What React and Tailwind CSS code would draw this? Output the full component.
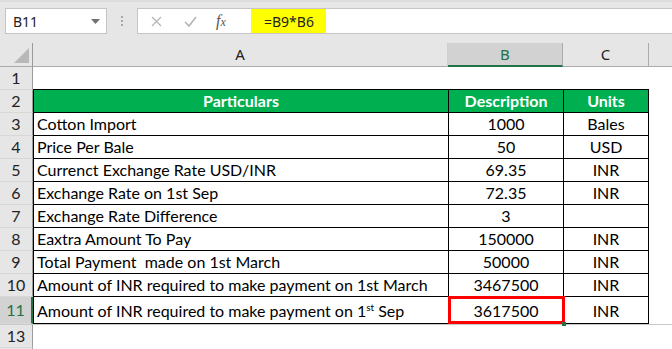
import React from "react";

const F = { fontFamily: "Lato, 'Open Sans', sans-serif" };

const rows = [
  { n: "3", a: "Cotton Import", b: "1000", c: "Bales" },
  { n: "4", a: "Price Per Bale", b: "50", c: "USD" },
  { n: "5", a: "Currenct Exchange Rate USD/INR", b: "69.35", c: "INR" },
  { n: "6", a: "Exchange Rate on 1st Sep", b: "72.35", c: "INR" },
  { n: "7", a: "Exchange Rate Difference", b: "3", c: "" },
  { n: "8", a: "Eaxtra Amount To Pay", b: "150000", c: "INR" },
  { n: "9", a: "Total Payment  made on 1st March", b: "50000", c: "INR" },
  { n: "10", a: "Amount of INR required to make payment on 1st March", b: "3467500", c: "INR" },
];

function RowHead({ children, active, h = "h-[23px]" }) {
  return (
    <div
      className={`${h} w-[33px] shrink-0 flex items-center justify-center border-b border-[#d8d8d8] text-[16px] ${
        active
          ? "bg-[#d2d2d2] text-[#217346] border-r-2 border-r-[#217346]"
          : "bg-[#e6e6e6] text-[#222] border-r border-r-[#9b9b9b]"
      }`}
      style={F}
    >
      {children}
    </div>
  );
}

export default function App() {
  return (
    <div className="w-[672px] h-[349px] overflow-hidden bg-white text-black" style={F}>
      {/* formula bar area */}
      <div className="h-[43px] bg-[#e6e6e6] border-t-2 border-t-[#dcdcdc] flex items-start pt-[6px]">
        <div className="ml-[5px] w-[102px] h-[26px] bg-white border border-[#c6c6c6] flex items-center justify-between pl-[7px] pr-[6px]">
          <span className="text-[14px] text-[#222]" style={{ fontFamily: "'Noto Sans', sans-serif" }}>B11</span>
          <svg width="9" height="5" viewBox="0 0 9 5"><path d="M0 0h9L4.5 5z" fill="#707070" /></svg>
        </div>
        <div className="w-[30px] h-[26px] flex flex-col items-center justify-center gap-[2px]">
          <span className="w-[2px] h-[2px] bg-[#a8a8a8]" />
          <span className="w-[2px] h-[2px] bg-[#a8a8a8]" />
          <span className="w-[2px] h-[2px] bg-[#a8a8a8]" />
        </div>
        <div className="w-[111px] h-[26px] bg-white border border-[#c6c6c6] border-r-0 flex items-center">
          <svg className="ml-[13px]" width="11" height="11" viewBox="0 0 11 11">
            <path d="M1 1L10 10M10 1L1 10" stroke="#b4b4b4" strokeWidth="1.3" />
          </svg>
          <svg className="ml-[22px]" width="13" height="11" viewBox="0 0 13 11">
            <path d="M1 6L5 10L12 1" stroke="#b4b4b4" strokeWidth="1.6" fill="none" />
          </svg>
          <span className="ml-[19px] text-[16px] italic text-[#555] leading-none" style={{ fontFamily: "'Liberation Serif', serif" }}>
            f<span className="text-[12px]">x</span>
          </span>
        </div>
        <div className="w-[3px] h-[26px] bg-white border-y border-[#c6c6c6]" />
        <div className="flex-1 h-[26px] bg-white border border-[#c6c6c6] border-r-0 border-l-0 flex">
          <div className="w-[75px] h-full bg-[#ffff00] flex items-center pl-[13px] text-[14px] text-[#222]" style={{ fontFamily: "'Noto Sans', sans-serif" }}>
            =B9*B6
          </div>
        </div>
      </div>

      {/* column headers */}
      <div className="h-[24px] flex bg-[#e6e6e6] text-[15px] text-[#222]" style={{ fontFamily: "'Noto Sans', sans-serif" }}>
        <div className="w-[33px] h-full border-r border-[#9b9b9b] border-b border-b-[#ababab] relative">
          <svg className="absolute right-[3px] bottom-[3px]" width="15" height="15" viewBox="0 0 15 15">
            <path d="M15 0V15H0z" fill="#b8b8b8" />
          </svg>
        </div>
        <div className="w-[415px] h-full flex items-center justify-center border-r border-[#cfcfcf] border-b border-b-[#ababab]">A</div>
        <div className="w-[115px] h-full flex items-center justify-center bg-[#d2d2d2] text-[#217346] border-r border-[#ababab] border-b-2 border-b-[#217346]">B</div>
        <div className="w-[86px] h-full flex items-center justify-center border-r border-[#ababab] border-b border-b-[#ababab]">C</div>
        <div className="flex-1 h-full border-b border-b-[#ababab]" />
      </div>

      {/* row 1 */}
      <div className="flex">
        <RowHead>1</RowHead>
        <div className="w-[616px] h-[23px] border-b border-black" />
      </div>

      {/* row 2 header */}
      <div className="flex">
        <RowHead>2</RowHead>
        <div className="flex h-[23px] bg-[#00b050] text-white font-bold text-[16px] border-b border-black">
          <div className="w-[415px] border-l border-black flex items-center justify-center">Particulars</div>
          <div className="w-[115px] border-l border-black flex items-center justify-center">Description</div>
          <div className="w-[86px] border-l border-r border-black flex items-center justify-center">Units</div>
        </div>
      </div>

      {rows.map((r) => (
        <div className="flex" key={r.n}>
          <RowHead>{r.n}</RowHead>
          <div className="flex h-[23px] text-[16px] border-b border-black">
            <div className="w-[415px] border-l border-black flex items-center pl-[3px] whitespace-pre">{r.a}</div>
            <div className="w-[115px] border-l border-black flex items-center justify-center">{r.b}</div>
            <div className="w-[86px] border-l border-r border-black flex items-center justify-center">{r.c}</div>
          </div>
        </div>
      ))}

      {/* row 11 */}
      <div className="flex">
        <RowHead active h="h-[27px]">11</RowHead>
        <div className="flex h-[27px] text-[16px] border-b border-black">
          <div className="w-[415px] border-l border-black flex items-center pl-[3px] pt-[2px]">
            <span>
              Amount of INR required to make payment on 1
              <span className="text-[10px] relative -top-[6px]">st</span>
              &nbsp;Sep
            </span>
          </div>
          <div className="w-[115px] border-l border-black relative flex items-center justify-center">
            <div className="absolute -left-[1px] -top-[1px] w-[117px] h-[28px] border-[3px] border-[#ff0000]" />
            <div className="absolute -right-[3px] -bottom-[3px] w-[4px] h-[4px] bg-[#217346]" />
            <span className="relative pt-[2px]">3617500</span>
          </div>
          <div className="w-[86px] border-l border-r border-black flex items-center justify-center pt-[2px]">INR</div>
        </div>
      </div>

      {/* row 13 */}
      <div className="flex border-t border-[#c8c8c8]">
        <RowHead>13</RowHead>
        <div className="flex-1" />
      </div>
      <div className="flex">
        <RowHead>{""}</RowHead>
      </div>
    </div>
  );
}
